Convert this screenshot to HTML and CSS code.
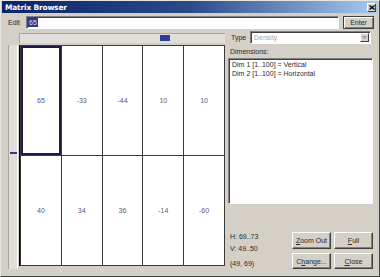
FILE: index.html
```html
<html>
<head>
    <title>Matrix Browser</title>
    <meta name="viewport" content="width=device-width, initial-scale=1" />
    <link rel="stylesheet" href="styles.css">
</head>
<body>
<div class="window">
    <div class="titlebar">
        <span class="title">Matrix Browser</span>
        <span class="close">
            <svg width="6" height="5" viewBox="0 0 6 5"><path d="M0.5 0.5l5 4M5.5 0.5l-5 4" stroke="#000" stroke-width="1.3"/></svg>
        </span>
    </div>
    <div class="content">
        <div class="edit-row">
            <span class="label">Edit</span>
            <div class="input"><span class="selection">65</span></div>
            <button class="btn enter">Enter</button>
        </div>
        <div class="main">
            <div class="matrix">
                <div class="corner"></div>
                <div class="hruler"><span class="hthumb"></span></div>
                <div class="vruler"><span class="vthumb"></span></div>
                <div class="grid">
                    <div class="cell current">65</div>
                    <div class="cell">-33</div>
                    <div class="cell">-44</div>
                    <div class="cell">10</div>
                    <div class="cell">10</div>
                    <div class="cell">40</div>
                    <div class="cell">34</div>
                    <div class="cell">36</div>
                    <div class="cell">-14</div>
                    <div class="cell">-60</div>
                </div>
            </div>
            <div class="side">
                <div class="type-row">
                    <span class="label">Type</span>
                    <div class="combo">
                        <span class="combo-text">Density</span>
                        <span class="combo-arrow">
                            <svg width="5" height="3" viewBox="0 0 5 3"><path d="M0 0h5L2.5 3z" fill="#9a9a9a"/></svg>
                        </span>
                    </div>
                </div>
                <div class="dim-label">Dimensions:</div>
                <div class="listbox">
                    <div>Dim 1 [1..100] = Vertical</div>
                    <div>Dim 2 [1..100] = Horizontal</div>
                </div>
                <div class="bottom">
                    <div class="status">
                        <div>H: 69..73</div>
                        <div>V: 49..50</div>
                        <div class="pos">(49, 69)</div>
                    </div>
                    <div class="buttons">
                        <button class="btn"><u>Z</u>oom Out</button>
                        <button class="btn"><u>F</u>ull</button>
                        <button class="btn">C<u>h</u>ange...</button>
                        <button class="btn"><u>C</u>lose</button>
                    </div>
                </div>
            </div>
        </div>
    </div>
</div>
</body>
</html>
```

FILE: styles.css
```css
body {
    margin: 0;
    font-family: "Liberation Sans", Arial, sans-serif;
    font-size: 7px;
    color: #2a2a2a;
}

.window {
    width: 380px;
    height: 277px;
    box-sizing: border-box;
    background: #d4d0c8;
    border: 1px solid;
    border-color: #e8e6e2 #404040 #404040 #e8e6e2;
    display: flex;
    flex-direction: column;
}

.titlebar {
    height: 12px;
    margin: 0 1px;
    display: flex;
    align-items: center;
    justify-content: space-between;
    padding: 0 2px 0 3px;
    background: linear-gradient(to right, #0a246a, #2a4a8a 50%, #a6caf0);
}

.title {
    color: #fff;
    font-weight: bold;
    font-size: 7.5px;
    font-family: "DejaVu Sans", sans-serif;
    letter-spacing: -0.2px;
}

.close {
    width: 9px;
    height: 9px;
    background: #d4d0c8;
    border: 1px solid;
    border-color: #fff #404040 #404040 #fff;
    box-sizing: border-box;
    display: flex;
    align-items: center;
    justify-content: center;
}

.content {
    padding: 2px 5px 0 7px;
}

.edit-row {
    display: flex;
    align-items: center;
    height: 14px;
}

.edit-row .label {
    width: 18px;
}

.input {
    width: 313px;
    height: 13px;
    box-sizing: border-box;
    background: #fff;
    border: 1px solid;
    border-color: #808080 #fff #fff #808080;
    box-shadow: inset 1px 1px 0 #404040;
    display: flex;
    align-items: center;
    padding-left: 1px;
}

.selection {
    background: #2a3a8c;
    color: #d8dcf0;
    padding: 0 1px;
    line-height: 9px;
}

.btn {
    font-family: inherit;
    font-size: 7px;
    color: #2a2a2a;
    background: #d4d0c8;
    border: 1px solid;
    border-color: #fff #404040 #404040 #fff;
    box-shadow: inset -1px -1px 0 #808080;
    padding: 0;
    margin: 0;
}

.enter {
    width: 31px;
    height: 13px;
    margin-left: 4px;
    border-color: #404040;
    box-shadow: inset 1px 1px 0 #fff, inset -1px -1px 0 #808080;
}

.main {
    display: flex;
    margin-top: 2px;
}

.matrix {
    display: grid;
    grid-template-columns: 10px 206px;
    grid-template-rows: 10px 224px;
    column-gap: 1px;
    row-gap: 2px;
    margin-top: 2px;
}

.hruler {
    position: relative;
    background: #e2dfda;
    border-top: 1px solid #a8a5a0;
    border-left: 1px solid #a8a5a0;
    box-sizing: border-box;
}

.hthumb {
    position: absolute;
    left: 140px;
    top: 1px;
    width: 10px;
    height: 6px;
    background: #2c3c98;
}

.vruler {
    position: relative;
    background: #e2dfda;
    border-left: 1px solid #a8a5a0;
    border-right: 1px solid #fff;
    box-sizing: border-box;
}

.vthumb {
    position: absolute;
    left: 1px;
    top: 107px;
    width: 7px;
    height: 2px;
    background: #2c3c98;
}

.grid {
    display: grid;
    grid-template-columns: repeat(5, 1fr);
    grid-template-rows: repeat(2, 1fr);
    gap: 1px;
    padding: 1px;
    height: 221px;
    background: #3a3a3a;
    border-left: 1px solid #000;
    box-sizing: border-box;
}

.cell {
    background: #fff;
    display: flex;
    align-items: center;
    justify-content: center;
    color: #5a5a7e;
}

.cell.current {
    box-shadow: inset 0 0 0 2px #1c1c48;
}

.side {
    margin-left: 3px;
    width: 146px;
    display: flex;
    flex-direction: column;
}

.type-row {
    display: flex;
    align-items: center;
    height: 13px;
}

.type-row .label {
    width: 22px;
    padding-left: 3px;
    box-sizing: border-box;
}

.combo {
    width: 121px;
    height: 13px;
    box-sizing: border-box;
    background: #fff;
    border: 1px solid;
    border-color: #808080 #fff #fff #808080;
    box-shadow: inset 1px 1px 0 #404040;
    display: flex;
    align-items: center;
    justify-content: space-between;
}

.combo-text {
    color: #a8a8a8;
    padding-left: 3px;
}

.combo-arrow {
    width: 9px;
    height: 9px;
    margin-right: 1px;
    background: #d4d0c8;
    border: 1px solid;
    border-color: #fff #404040 #404040 #fff;
    box-sizing: border-box;
    display: flex;
    align-items: center;
    justify-content: center;
}

.dim-label {
    margin-top: 3px;
    padding-left: 2px;
    height: 10px;
    line-height: 10px;
}

.listbox {
    margin-top: 1px;
    width: 145px;
    height: 146px;
    box-sizing: border-box;
    background: #fff;
    border: 1px solid;
    border-color: #808080 #fff #fff #808080;
    box-shadow: inset 1px 1px 0 #404040;
    padding: 2px 3px;
    line-height: 8.5px;
}

.bottom {
    display: flex;
    justify-content: space-between;
    margin-top: 28px;
    width: 145px;
}

.status {
    padding-left: 2px;
    line-height: 12px;
    margin-top: -1px;
}

.status .pos {
    margin-top: 3px;
}

.buttons {
    display: grid;
    grid-template-columns: 39px 39px;
    grid-template-rows: 17px 16px;
    column-gap: 3px;
    row-gap: 4px;
}
```
